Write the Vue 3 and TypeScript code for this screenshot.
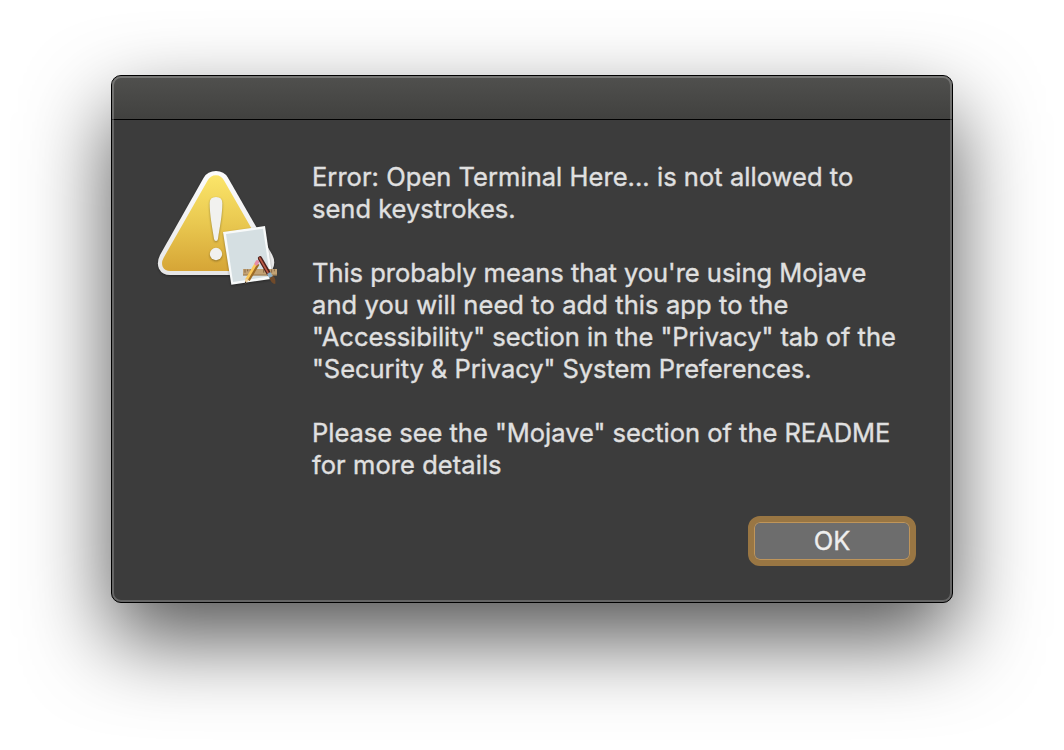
<script setup lang="ts">
interface Line {
  text: string
  spacing: number
}

const paragraphs: Line[][] = [
  [
    { text: 'Error: Open Terminal Here... is not allowed to', spacing: 0.04 },
    { text: 'send keystrokes.', spacing: 0 },
  ],
  [
    { text: "This probably means that you're using Mojave", spacing: -0.03 },
    { text: 'and you will need to add this app to the', spacing: 0.09 },
    { text: '"Accessibility" section in the "Privacy" tab of the', spacing: -0.04 },
    { text: '"Security & Privacy" System Preferences.', spacing: -0.04 },
  ],
  [
    { text: 'Please see the "Mojave" section of the README', spacing: -0.02 },
    { text: 'for more details', spacing: 0.06 },
  ],
]
</script>

<template>
  <main class="desktop">
    <section class="dialog" role="alertdialog">
      <header class="titlebar"></header>
      <div class="content">
        <svg class="icon" viewBox="0 0 420 405" aria-hidden="true">
          <defs>
            <linearGradient id="yellow" x1="0" y1="0" x2="0" y2="1">
              <stop offset="0" stop-color="#fbe569" />
              <stop offset="0.5" stop-color="#e9c850" />
              <stop offset="1" stop-color="#d6a536" />
            </linearGradient>
            <linearGradient id="rim" x1="0" y1="0" x2="0" y2="1">
              <stop offset="0" stop-color="#fcfcfc" />
              <stop offset="1" stop-color="#e6e6e6" />
            </linearGradient>
            <filter id="soft" x="-20%" y="-20%" width="140%" height="140%" color-interpolation-filters="sRGB">
              <feDropShadow dx="0" dy="3" stdDeviation="3" flood-color="#000" flood-opacity="0.35" />
            </filter>
          </defs>
          <path
            d="M161 53 Q173 33 198 33 Q222 33 234 53 L367 285 Q378 307 368 326 Q358 345 335 345 H60 Q37 345 27 326 Q19 307 30 285 Z"
            fill="url(#rim)" filter="url(#soft)"
          />
          <path
            d="M172 63 Q181 46 198 46 Q214 46 223 63 L355 293 Q363 307 357 320 Q350 333 334 333 H61 Q45 333 38 320 Q33 307 41 293 Z"
            fill="url(#yellow)"
          />
          <g fill="#f1f1ef" filter="url(#soft)">
            <path d="M179 130 Q179 111 198 111 Q217 111 217 130 C217 164 209 205 204 236 Q203 243 198 243 Q193 243 192 236 C187 205 179 164 179 130 Z" />
            <circle cx="198" cy="282" r="18.5" />
          </g>
          <path d="M219 216 L345 198 L368 356 L244 374 Z" fill="#f8fafa" filter="url(#soft)" />
          <path d="M228 222 L339 206 L360 349 L249 366 Z" fill="#d5dfe2" />
          <rect x="279" y="327" width="102" height="19" fill="#c2a274" />
          <path d="M279 345 H381" stroke="#98794f" stroke-width="3" />
          <path
            d="M285 328v10 M293 328v6 M301 328v6 M309 328v10 M341 328v10 M349 328v6 M357 328v6 M365 328v10 M373 328v6"
            stroke="#866745" stroke-width="3"
          />
          <path d="M323 311 L294 360" stroke="#9d6b25" stroke-width="12" />
          <path d="M319 309 L290 358" stroke="#fbc95a" stroke-width="8" />
          <path d="M285 354 L297 361 L285 372 Z" fill="#efd3a0" />
          <path d="M285 364 L290 368 L285 372 Z" fill="#332a25" />
          <path d="M319 311 L322 306" stroke="#e68ba6" stroke-width="11" stroke-linecap="round" />
          <path d="M330 295 L356 340" stroke="#4c201b" stroke-width="13" stroke-linecap="round" />
          <path d="M329 294 L354 338" stroke="#bd5c48" stroke-width="5" stroke-linecap="round" />
          <path d="M356 339 L364 352" stroke="#8fb0c5" stroke-width="12" />
          <path d="M358 353 L370 348 Q378 356 376 372 Q363 370 358 353 Z" fill="#704a2a" />
        </svg>
        <div class="body">
          <div class="message">
            <p v-for="(lines, i) in paragraphs" :key="i">
              <span
                v-for="line in lines"
                :key="line.text"
                class="line"
                :style="{ letterSpacing: line.spacing + 'px' }"
              >{{ line.text }}</span>
            </p>
          </div>
          <button class="ok" type="button">OK</button>
        </div>
      </div>
    </section>
  </main>
</template>

<style>
body {
  margin: 0;
  background: #fff;
}
</style>

<style scoped>
.desktop {
  box-sizing: border-box;
  width: 1064px;
  height: 750px;
  padding: 75px 111px 0;
  overflow: hidden;
  background: #fff;
  font-family: Inter, "Liberation Sans", sans-serif;
}
.dialog {
  position: relative;
  box-sizing: border-box;
  width: 842px;
  height: 528px;
  border: 1px solid #000;
  border-radius: 10px;
  background: #3c3c3c;
  box-shadow: 0 36px 84px rgba(0, 0, 0, 0.67);
}
.dialog::after {
  content: "";
  position: absolute;
  inset: 0;
  border: 2px solid rgba(255, 255, 255, 0.22);
  border-radius: 9px;
  pointer-events: none;
}
.titlebar {
  height: 43px;
  border-bottom: 1px solid #000;
  border-radius: 9px 9px 0 0;
  background: linear-gradient(#50504e, #41413f);
}
.content {
  display: flex;
  padding: 40px 36px 0 38px;
}
.icon {
  flex: none;
  width: 140px;
  height: 135px;
}
.body {
  flex: 1;
  display: flex;
  flex-direction: column;
  padding: 1px 0 0 22px;
}
.message {
  display: flex;
  flex-direction: column;
  gap: 32px;
  color: #e0e0e0;
  font-size: 25.5px;
  line-height: 32px;
  -webkit-text-stroke: 0.35px #e0e0e0;
}
.message p {
  margin: 0;
}
.line {
  display: block;
  white-space: pre;
}
.ok {
  align-self: flex-end;
  box-sizing: border-box;
  width: 168px;
  height: 50px;
  margin-top: 35px;
  padding: 0;
  border: 6px solid #997643;
  border-radius: 12px;
  background: #6d6d6d;
  box-shadow: inset 0 0 0 1px #bf955a;
  color: #eee;
  font: 25.5px/38px Inter, "Liberation Sans", sans-serif;
  -webkit-text-stroke: 0.35px #eee;
}
</style>
